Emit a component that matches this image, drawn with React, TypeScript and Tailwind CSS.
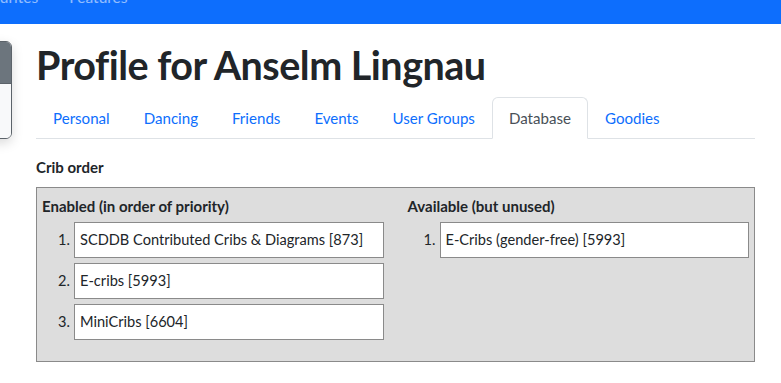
import React from "react";

const tabs = ["Personal", "Dancing", "Friends", "Events", "User Groups", "Database", "Goodies"];

const enabled = [
  "SCDDB Contributed Cribs & Diagrams [873]",
  "E-cribs [5993]",
  "MiniCribs [6604]",
];

const available = ["E-Cribs (gender-free) [5993]"];

function CribList({ title, items }: { title: string; items: string[] }) {
  return (
    <div className="flex flex-col">
      <div className="text-[15px] font-bold leading-[22px] text-[#212529]">{title}</div>
      <ol className="mt-[5px] flex flex-col gap-[5px]">
        {items.map((item, i) => (
          <li key={item} className="flex items-center">
            <span className="w-[32px] pr-[4px] text-right text-[14.6px] text-[#212529]">{i + 1}.</span>
            <div className="flex h-[36px] flex-1 items-center border border-[#8a8a8a] bg-white px-[5px] text-[14.6px] text-[#212529]">
              {item}
            </div>
          </li>
        ))}
      </ol>
    </div>
  );
}

export default function App() {
  return (
    <div className="relative h-[383px] w-[781px] overflow-hidden bg-white font-['Lato',sans-serif] text-[#212529]">
      {/* navbar, scrolled mostly out of view */}
      <div className="h-[24px] overflow-hidden bg-[#0d6efd]">
        <div className="-ml-[32px] -mt-[15px] flex gap-[31px] text-[15.5px] leading-[24px] text-white/55">
          <span>Favourites</span>
          <span>Features</span>
        </div>
      </div>

      {/* floating side card, cut off at the left edge */}
      <div className="absolute left-[-30px] top-[41px] h-[98px] w-[42px] overflow-hidden rounded-[6px] border border-[#5c636a] shadow-[0_4px_12px_rgba(0,0,0,0.15)]">
        <div className="h-[41px] bg-[#6c757d]" />
        <div className="h-full border-t border-[#5c636a] bg-[#f8f9fa]" />
      </div>

      <div className="ml-[36px] mr-[26px]">
        <h1 className="mt-[17px] text-[39.5px] font-bold leading-[48px] tracking-[-0.5px] text-[#212529]">
          Profile for Anselm Lingnau
        </h1>

        <ul className="mt-[8px] flex border-b border-[#dee2e6]">
          {tabs.map((t) => (
            <li key={t} className="-mb-px">
              <div
                className={`rounded-t-[6px] border px-[16px] py-[8px] text-[15.1px] leading-[24px] ${
                  t === "Database"
                    ? "border-[#dee2e6] border-b-white bg-white text-[#495057]"
                    : "border-transparent text-[#0d6efd]"
                }`}
              >
                {t}
              </div>
            </li>
          ))}
        </ul>

        <div className="mt-[17px] text-[15px] font-bold leading-[22px]">Crib order</div>

        <div className="mt-[9px] grid h-[175px] grid-cols-2 gap-x-[24px] border border-[#8a8a8a] bg-[#dddddd] pb-[16px] pl-[5px] pr-[5px] pt-[7px]">
          <CribList title="Enabled (in order of priority)" items={enabled} />
          <CribList title="Available (but unused)" items={available} />
        </div>
      </div>
    </div>
  );
}
